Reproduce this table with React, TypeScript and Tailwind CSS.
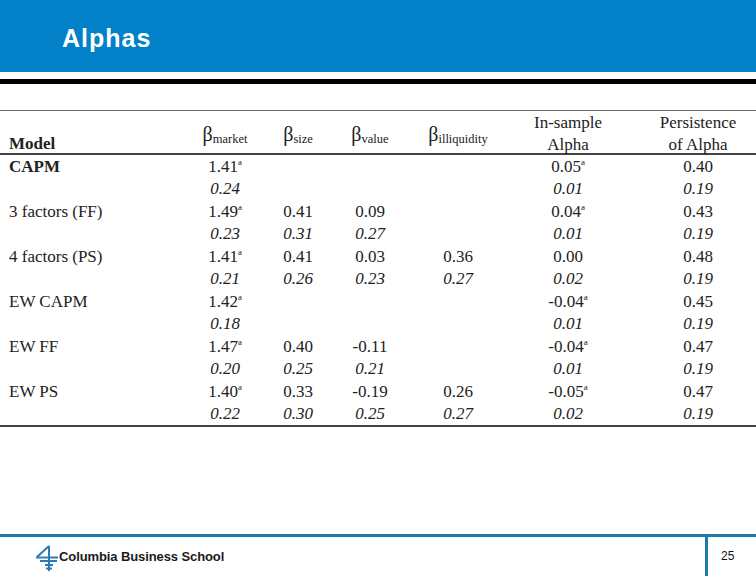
import React from "react";

const serif = { fontFamily: '"Liberation Serif", "Times New Roman", serif' };
const sans = { fontFamily: '"Liberation Sans", Arial, sans-serif' };

type Row = { model?: string; bold?: boolean; italic?: boolean; v: (string | null)[]; sup?: boolean[] };

const rows: Row[] = [
  { model: "CAPM", bold: true, v: ["1.41", null, null, null, "0.05", "0.40"], sup: [true, false, false, false, true, false] },
  { italic: true, v: ["0.24", null, null, null, "0.01", "0.19"] },
  { model: "3 factors (FF)", v: ["1.49", "0.41", "0.09", null, "0.04", "0.43"], sup: [true, false, false, false, true, false] },
  { italic: true, v: ["0.23", "0.31", "0.27", null, "0.01", "0.19"] },
  { model: "4 factors (PS)", v: ["1.41", "0.41", "0.03", "0.36", "0.00", "0.48"], sup: [true, false, false, false, false, false] },
  { italic: true, v: ["0.21", "0.26", "0.23", "0.27", "0.02", "0.19"] },
  { model: "EW CAPM", v: ["1.42", null, null, null, "-0.04", "0.45"], sup: [true, false, false, false, true, false] },
  { italic: true, v: ["0.18", null, null, null, "0.01", "0.19"] },
  { model: "EW FF", v: ["1.47", "0.40", "-0.11", null, "-0.04", "0.47"], sup: [true, false, false, false, true, false] },
  { italic: true, v: ["0.20", "0.25", "0.21", null, "0.01", "0.19"] },
  { model: "EW PS", v: ["1.40", "0.33", "-0.19", "0.26", "-0.05", "0.47"], sup: [true, false, false, false, true, false] },
  { italic: true, v: ["0.22", "0.30", "0.25", "0.27", "0.02", "0.19"] },
];

function Beta({ sub }: { sub: string }) {
  return (
    <span className="inline-flex items-baseline text-[#222]">
      <span className="text-[20px] leading-none">β</span>
      <span className="text-[12.5px] leading-none relative top-[2px]">{sub}</span>
    </span>
  );
}

function Logo() {
  return (
    <svg width="23" height="27" viewBox="0 0 23 27" fill="none" stroke="#2a7bb8" strokeWidth="2">
      <path d="M14 2 L2 13" />
      <path d="M1 13.5 H23" />
      <path d="M14 2 V27" />
      <path d="M5 17 H22" />
      <path d="M10 21 H18" />
      <path d="M11 24.5 H17" />
    </svg>
  );
}

export default function App() {
  return (
    <div className="w-[756px] h-[576px] bg-white flex flex-col overflow-hidden">
      <div className="h-[72px] bg-[#0281c8] pl-[62px] pt-[26px]">
        <div className="text-white font-bold text-[25px] leading-none tracking-[1px]" style={sans}>
          Alphas
        </div>
      </div>
      <div className="h-[7px]" />
      <div className="h-[5px] bg-black" />
      <div className="h-[26px]" />
      <div className="text-[17px] text-[#222]" style={serif}>
        <div className="grid grid-cols-[190px_70px_76px_68px_108px_112px_1fr] h-[45px] border-t-[1.5px] border-b-2 border-t-[#666] border-b-[#444]">
          <div className="pl-[9px] flex items-end pb-[0px] font-bold">Model</div>
          <div className="flex items-center justify-center pt-[0px]"><Beta sub="market" /></div>
          <div className="flex items-center justify-center pt-[0px]"><Beta sub="size" /></div>
          <div className="flex items-center justify-center pt-[0px]"><Beta sub="value" /></div>
          <div className="flex items-center justify-center pt-[0px]"><Beta sub="illiquidity" /></div>
          <div className="flex flex-col items-center justify-center leading-[22px] pt-[1px]">
            <div>In-sample</div>
            <div>Alpha</div>
          </div>
          <div className="flex flex-col items-center justify-center leading-[22px] pl-[16px] pt-[1px]">
            <div>Persistence</div>
            <div>of Alpha</div>
          </div>
        </div>
        <div className="border-b-2 border-[#444]">
          {rows.map((r, i) => (
            <div key={i} className={`grid grid-cols-[190px_70px_76px_68px_108px_112px_1fr] h-[22.5px] items-center leading-none ${r.italic ? "italic" : ""}`}>
              <div className={`pl-[9px] ${r.bold ? "font-bold" : ""}`}>{r.model ?? ""}</div>
              {r.v.map((val, j) => (
                <div key={j} className={`text-center ${j === 5 ? "pl-[16px]" : ""}`}>
                  {val !== null && (
                    <span>
                      {val}
                      {r.sup && r.sup[j] ? <span className="text-[9px] relative top-[-7px]">a</span> : null}
                    </span>
                  )}
                </div>
              ))}
            </div>
          ))}
        </div>
      </div>
      <div className="flex-1" />
      <div className="h-[42px] border-t-[3px] border-[#1e78aa] flex">
        <div className="flex-1 flex items-center pl-[35px] gap-[1px] pt-[1px]">
          <Logo />
          <span className="text-[13px] font-bold text-[#1a1a1a] tracking-[-0.1px]" style={sans}>
            Columbia Business School
          </span>
        </div>
        <div className="w-[3px] bg-[#1e78aa]" />
        <div className="w-[48px] pl-[13px] pt-[10px] text-[12px] text-[#111]" style={sans}>
          25
        </div>
      </div>
    </div>
  );
}
